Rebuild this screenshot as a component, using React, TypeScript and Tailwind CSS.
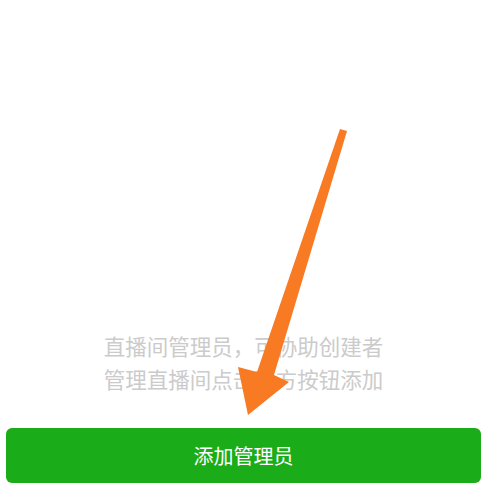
export default function App() {
  return (
    <div
      className="relative w-[496px] h-[488px] bg-white overflow-hidden"
      style={{ fontFamily: '"Noto Sans CJK SC", "Noto Sans", sans-serif' }}
    >
      <div className="flex flex-col justify-end h-full w-[487px] pb-[5px]">
        <div className="text-center text-[21.5px] leading-[33px] text-[#cbcbcb]">
          <div>直播间管理员，可协助创建者</div>
          <div>管理直播间点击下方按钮添加</div>
        </div>
        <button className="mt-[33px] ml-[6px] w-[475px] h-[55px] rounded-[6px] bg-[#1aad19] text-white text-[20px] flex items-center justify-center">
          添加管理员
        </button>
      </div>
      <svg
        className="absolute left-0 top-0 pointer-events-none"
        width="496"
        height="488"
        viewBox="0 0 496 488"
      >
        <polygon
          points="340,129 347,131 274,375 289,382 248,415 238,367 257,372"
          fill="#f87a22"
        />
      </svg>
    </div>
  );
}
